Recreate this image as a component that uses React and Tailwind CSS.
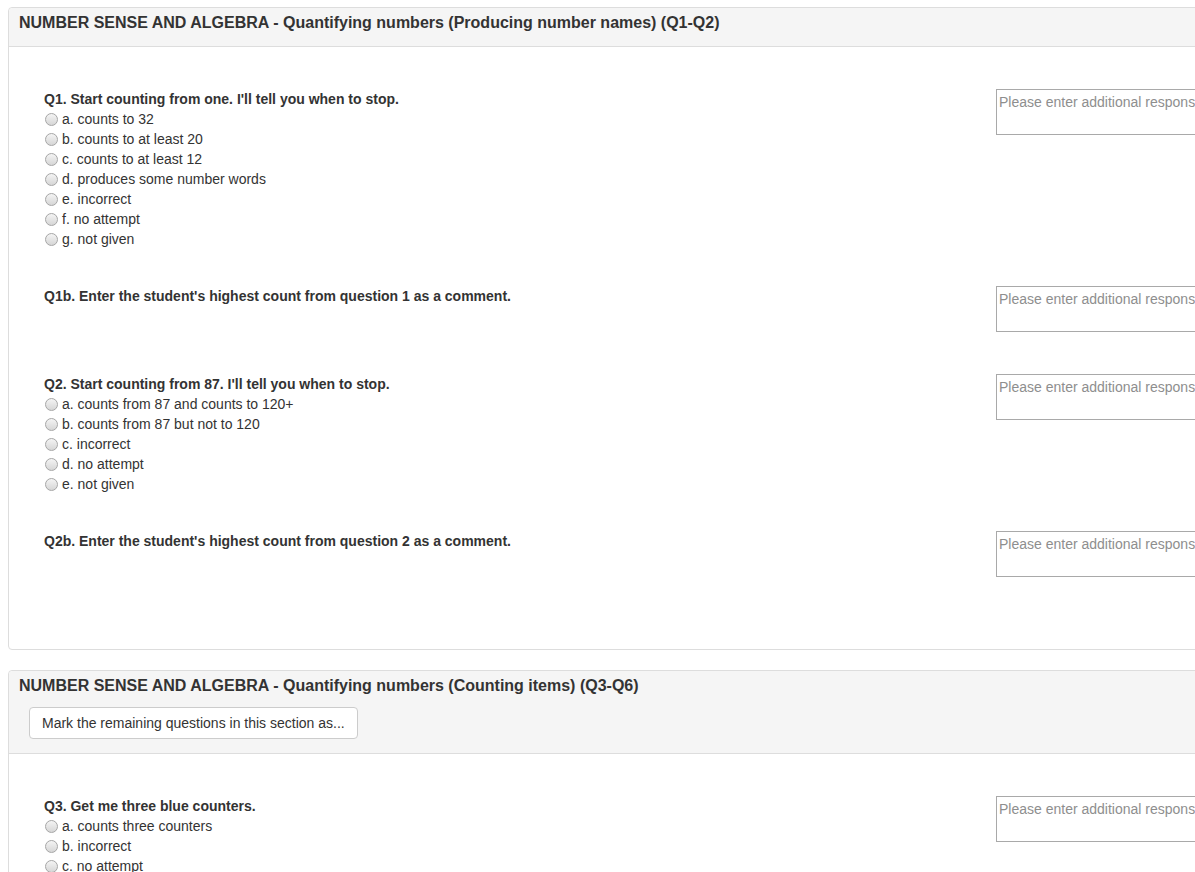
import React from "react";

const sections = [
  {
    title:
      "NUMBER SENSE AND ALGEBRA - Quantifying numbers (Producing number names) (Q1-Q2)",
    showMarkButton: false,
    questions: [
      {
        label: "Q1. Start counting from one. I'll tell you when to stop.",
        options: [
          "a. counts to 32",
          "b. counts to at least 20",
          "c. counts to at least 12",
          "d. produces some number words",
          "e. incorrect",
          "f. no attempt",
          "g. not given",
        ],
      },
      {
        label: "Q1b. Enter the student's highest count from question 1 as a comment.",
        options: [],
      },
      {
        label: "Q2. Start counting from 87. I'll tell you when to stop.",
        options: [
          "a. counts from 87 and counts to 120+",
          "b. counts from 87 but not to 120",
          "c. incorrect",
          "d. no attempt",
          "e. not given",
        ],
      },
      {
        label: "Q2b. Enter the student's highest count from question 2 as a comment.",
        options: [],
      },
    ],
  },
  {
    title: "NUMBER SENSE AND ALGEBRA - Quantifying numbers (Counting items) (Q3-Q6)",
    showMarkButton: true,
    questions: [
      {
        label: "Q3. Get me three blue counters.",
        options: ["a. counts three counters", "b. incorrect", "c. no attempt"],
      },
    ],
  },
];

// old-style grey radio dot
const Radio = () => (
  <span className="inline-block w-[13px] h-[13px] rounded-full border border-[#a6a6a6] bg-gradient-to-b from-[#f4f4f4] to-[#d6d6d6] shrink-0" />
);

const Question = ({ q }) => (
  <div className="flex mb-[37px]">
    <div className="flex-1 pl-[35px]">
      <div className="font-bold leading-[19px] pt-[1px]">{q.label}</div>
      {q.options.map((opt) => (
        <label key={opt} className="flex items-center h-5">
          <span className="ml-[1px] mr-[4px] flex items-center">
            <Radio />
          </span>
          <span>{opt}</span>
        </label>
      ))}
    </div>
    <div className="w-[240px] mr-[14px] h-[51px]">
      <textarea
        className="block w-full h-[46px] border border-[#a9a9a9] px-[2px] py-[2px] resize-none outline-none text-[14px] leading-5 placeholder:text-[#8e8e8e]"
        placeholder="Please enter additional response"
      />
    </div>
  </div>
);

const Section = ({ section, className }) => (
  <div
    className={
      "w-[1243px] border border-[#dddddd] rounded bg-white " + (className || "")
    }
  >
    <div className="bg-[#f5f5f5] border-b border-[#dddddd] rounded-t pt-[6px] pb-[14px] px-[10px]">
      <h3 className="text-[16px] font-bold leading-[18px]">{section.title}</h3>
      {section.showMarkButton && (
        <button className="mt-[12px] ml-[10px] h-[32px] px-[12px] border border-[#cccccc] rounded bg-white text-[14px] text-[#333333]">
          Mark the remaining questions in this section as...
        </button>
      )}
    </div>
    <div className="pt-[42px] pb-[30px]">
      {section.questions.map((q) => (
        <Question key={q.label} q={q} />
      ))}
    </div>
  </div>
);

export default function App() {
  return (
    <div
      className="w-[1195px] h-[872px] overflow-hidden bg-white text-[#333333] text-[14px] leading-5"
      style={{ fontFamily: '"Liberation Sans", Arial, sans-serif' }}
    >
      <div className="pt-[7px] pl-[8px]">
        <Section section={sections[0]} />
        <Section section={sections[1]} className="mt-[20px]" />
      </div>
    </div>
  );
}
